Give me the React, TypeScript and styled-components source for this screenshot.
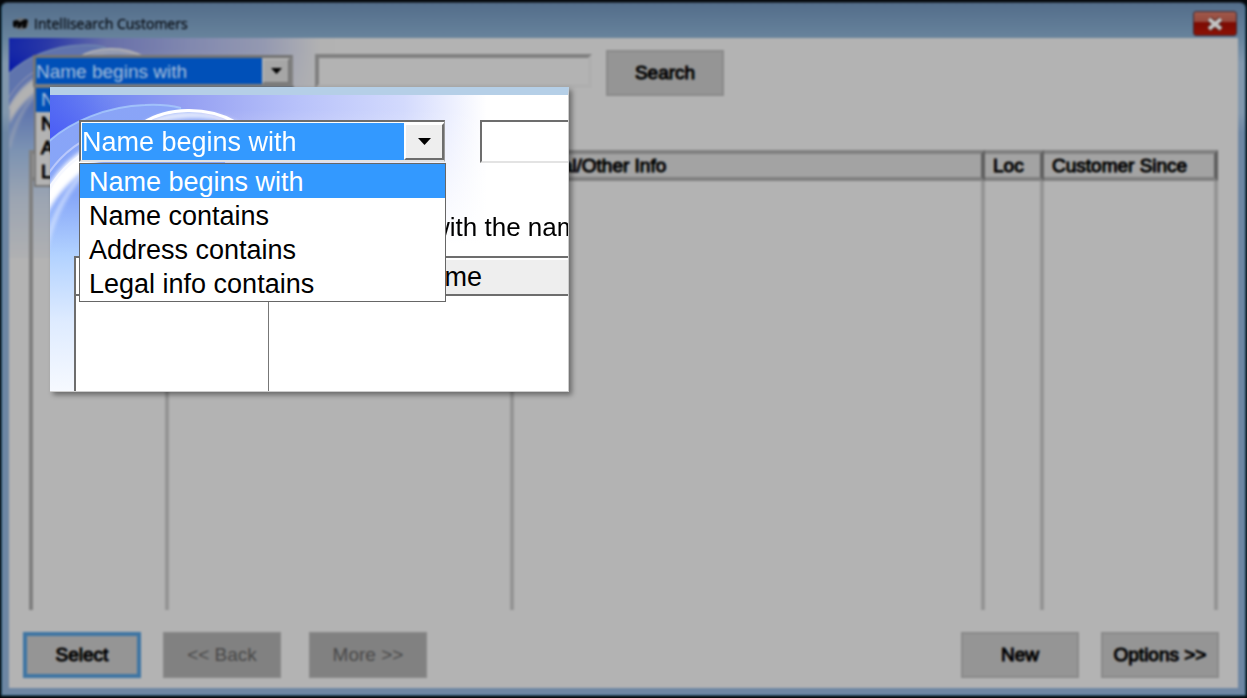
import React from "react";
import styled, { createGlobalStyle } from "styled-components";

const GlobalStyle = createGlobalStyle`
  *, *::before, *::after { box-sizing: border-box; }
  body { margin: 0; background: #05080c; font-family: "Liberation Sans", Arial, sans-serif; }
  button, input, select { font-family: inherit; margin: 0; border-radius: 0; }
`;

const Stage = styled.main`
  position: relative;
  min-height: 100vh;
  display: flex;
  overflow: hidden;
`;

const Window = styled.section`
  flex: 1;
  min-width: 0;
  display: flex;
  flex-direction: column;
  margin: 2px 1px 2px 1px;
  padding: 0 7px 7px;
  border: 1px solid #23566f;
  border-top-color: #2d3a48;
  border-radius: 6px 6px 0 0;
  background: linear-gradient(#536d8a 0, #68849d 36px, #8197ad 60px, #8197ad 110px, #6d86a3 130px);
  filter: blur(1px);
`;

const TitleBar = styled.header`
  height: 35px;
  display: flex;
  align-items: center;
  gap: 4px;
  padding: 6px 1px 0 3px;
`;

const Title = styled.h1`
  margin: 0;
  flex: 1;
  font: 400 14px/20px "Open Sans", sans-serif;
  color: #05090e;
  -webkit-text-stroke: 1px #05090e40;
`;

const CloseButton = styled.button`
  width: 44px;
  height: 25px;
  display: grid;
  place-items: center;
  padding: 0;
  border: 1px solid #3e2a35;
  border-radius: 3px;
  background: linear-gradient(#a05a4c 0, #95483c 42%, #7c0a02 46%, #8a1206 100%);
`;

const Content = styled.div`
  position: relative;
  flex: 1;
  display: flex;
  flex-direction: column;
  background: #b3b3b3;
`;

const Backdrop = styled.svg<{ $dim?: boolean }>`
  position: absolute;
  top: 0;
  left: ${(p) => (p.$dim ? "0" : "-5px")};
  width: ${(p) => (p.$dim ? "326px" : "460px")};
  height: ${(p) => (p.$dim ? "220px" : "310px")};
  filter: ${(p) => (p.$dim ? "brightness(0.7)" : "none")};
`;

const SearchRow = styled.div`
  position: relative;
  display: flex;
  align-items: flex-start;
  padding: 12px 24px 0;
`;

const Combo = styled.div<{ $large?: boolean }>`
  position: relative;
  display: flex;
  flex: none;
  width: ${(p) => (p.$large ? "366px" : "260px")};
  height: ${(p) => (p.$large ? "42px" : "32px")};
  margin-top: ${(p) => (p.$large ? "0" : "5px")};
  padding: ${(p) => (p.$large ? "1px 0 0 1px" : "0")};
  border: ${(p) => (p.$large ? "2px solid #6d6d6d" : "3px solid #747474")};
  border-right: ${(p) => (p.$large ? "1px solid #999" : "3px solid #808080")};
  border-bottom-color: ${(p) => (p.$large ? "#e3e3e3" : "#808080")};
  background: ${(p) => (p.$large ? "#fff" : "#b3b3b3")};
`;

const ComboSelect = styled.select<{ $large?: boolean }>`
  appearance: none;
  flex: 1;
  min-width: 0;
  padding: ${(p) => (p.$large ? "1px 0 0" : "0")};
  border: 0;
  outline: 0;
  background: ${(p) => (p.$large ? "#3399ff" : "#0050b8")};
  color: ${(p) => (p.$large ? "#fff" : "#a6bfdc")};
  font-size: ${(p) => (p.$large ? "27px" : "19px")};
`;

const ComboArrow = styled.span<{ $large?: boolean }>`
  display: grid;
  place-items: center;
  width: ${(p) => (p.$large ? "40px" : "28px")};
  border: 2px solid;
  border-color: ${(p) => (p.$large ? "#fff #6d6d6d #6d6d6d #fff" : "#b3b3b3 #777 #777 #b3b3b3")};
  background: ${(p) => (p.$large ? "#eee" : "#a6a6a6")};
`;

const List = styled.ul<{ $large?: boolean }>`
  position: absolute;
  z-index: 2;
  top: ${(p) => (p.$large ? "41px" : "28px")};
  left: -2px;
  width: ${(p) => (p.$large ? "367px" : "260px")};
  margin: 0;
  padding: 0 0 1px;
  list-style: none;
  border: ${(p) => (p.$large ? "1px solid #666" : "2px solid #777")};
  background: ${(p) => (p.$large ? "#fff" : "#b3b3b3")};
`;

const Option = styled.li<{ $large?: boolean; $active?: boolean }>`
  padding: ${(p) => (p.$large ? "2px 0 0 9px" : "0 0 0 5px")};
  font-size: ${(p) => (p.$large ? "27px" : "19px")};
  line-height: ${(p) => (p.$large ? "32px" : "24px")};
  color: ${(p) => (p.$active ? (p.$large ? "#fff" : "#a6bfdc") : "#000")};
  background: ${(p) => (p.$active ? (p.$large ? "#3399ff" : "#0050b8") : "transparent")};
  -webkit-text-stroke: ${(p) => (p.$large || p.$active ? "0" : "1px")};
`;

const SearchInput = styled.input<{ $large?: boolean }>`
  flex: none;
  width: ${(p) => (p.$large ? "390px" : "277px")};
  height: ${(p) => (p.$large ? "43px" : "34px")};
  margin: ${(p) => (p.$large ? "0 0 0 35px" : "4px 0 0 22px")};
  border: ${(p) => (p.$large ? "2px solid #6d6d6d" : "4px solid #808080")};
  border-right-color: ${(p) => (p.$large ? "#e3e3e3" : "#afafaf")};
  border-bottom-color: ${(p) => (p.$large ? "#e3e3e3" : "#afafaf")};
  background: ${(p) => (p.$large ? "#fff" : "#b3b3b3")};
`;

const Button = styled.button<{ $primary?: boolean }>`
  width: 118px;
  height: 46px;
  flex: none;
  padding: 0;
  border: ${(p) => (p.$primary ? "4px solid #3f75a3" : "2px solid #8a8a8a")};
  background: #959595;
  color: #000;
  font-size: 19px;
  -webkit-text-stroke: 1px #000;
  &:disabled {
    background: #818181;
    border-color: #858585;
    color: #484848;
    -webkit-text-stroke: 0;
  }
`;

const SearchSlot = styled.div`
  padding-left: 14px;
`;

const Results = styled.div`
  flex: 1;
  display: flex;
  padding: 54px 20px 0;
`;

const Grid = styled.table`
  width: 100%;
  table-layout: fixed;
  border-collapse: separate;
  border-spacing: 0;
  border-left: 4px solid #808080;
  position: relative;
  td {
    padding: 0;
    border-right: 4px solid #959595;
  }
`;

const HeadCell = styled.th<{ $wide?: boolean }>`
  height: 31px;
  padding: 0 0 0 ${(p) => (p.$wide ? "16px" : "8px")};
  text-align: left;
  font-size: 19px;
  line-height: 22px;
  font-weight: 400;
  color: #000;
  -webkit-text-stroke: 1px #000;
  background: #a3a3a3;
  border: 4px solid #808080;
  border-left: 0;
  border-right-color: #606060;
`;

const Footer = styled.footer`
  display: flex;
  justify-content: space-between;
  padding: 22px 19px 10px 14px;
`;

const Group = styled.div<{ $gap: number }>`
  display: flex;
  gap: ${(p) => p.$gap}px;
`;

const Magnifier = styled.section`
  position: absolute;
  top: 87px;
  left: 50px;
  width: 519px;
  height: 305px;
  overflow: hidden;
  border-top: 8px solid #b5cfe7;
  border-right: 1px solid #ccc;
  border-bottom: 1px solid #ccc;
  background: #fff;
  box-shadow: 3px 3px 5px #0006;
`;

const LargeRow = styled.div`
  position: relative;
  z-index: 1;
  display: flex;
  padding: 25px 0 0 29px;
`;

const Hint = styled.p`
  position: relative;
  margin: 0;
  padding: 48px 0 0 381px;
  font-size: 26px;
  line-height: 32px;
  white-space: nowrap;
`;

const LargeGrid = styled.table`
  position: relative;
  width: 900px;
  margin: 13px 0 0 24px;
  table-layout: fixed;
  border-collapse: separate;
  border-spacing: 0;
  border-left: 2px solid #6d6d6d;
  background: #fff;
  th {
    height: 40px;
    padding: 2px 0 0 141px;
    text-align: left;
    font-size: 27px;
    line-height: 34px;
    font-weight: 400;
    background: #eee;
    border-top: 2px solid #6d6d6d;
    border-bottom: 2px solid #6d6d6d;
    box-shadow: inset 0 2px #fff;
  }
  th:first-child { background: #fff; }
  td {
    height: 110px;
    padding: 0;
    border-right: 1px solid #777;
  }
`;

const choices = ["Name begins with", "Name contains", "Address contains", "Legal info contains"];

function Waves({ id, dim }: { id: string; dim?: boolean }) {
  return (
    <Backdrop $dim={dim} viewBox="0 0 460 310" preserveAspectRatio="none" aria-hidden="true">
      <defs>
        <linearGradient id={`${id}-top`} x1="0" y1="0" x2="1" y2="0">
          <stop offset="0" stopColor={dim ? "#0c26ee" : "#5068f2"} />
          <stop offset="0.12" stopColor={dim ? "#3a4eee" : "#6f86f2"} />
          <stop offset="0.3" stopColor="#949ff2" />
          <stop offset="0.55" stopColor="#b8c2fa" />
          <stop offset="0.78" stopColor="#d3dafd" />
          <stop offset="0.96" stopColor="#fff" />
        </linearGradient>
        <linearGradient id={`${id}-low`} x1="0" y1="0" x2="0" y2="1">
          <stop offset="0" stopColor="#8aa4f7" />
          <stop offset="0.3" stopColor="#86a6f8" />
          <stop offset="0.5" stopColor="#b2d2ff" />
          <stop offset="0.72" stopColor="#deebff" />
          <stop offset="1" stopColor="#fbfcff" />
        </linearGradient>
        <radialGradient id={`${id}-blue`} cx="0" cy="0.7" r="0.9">
          <stop offset="0" stopColor={dim ? "#0a24ee" : "#4a5cf6"} />
          <stop offset="1" stopColor="#5a70f4" stopOpacity="0" />
        </radialGradient>
        <linearGradient id={`${id}-down`} x1="0" y1="0" x2="0" y2="1">
          <stop offset="0.1" stopColor="#fff" stopOpacity="0" />
          <stop offset="1" stopColor="#fff" />
        </linearGradient>
        <filter id={`${id}-soft`}><feGaussianBlur stdDeviation="2" /></filter>
      </defs>
      <rect width="460" height="310" fill="#fff" />
      <rect width="460" height="150" fill={`url(#${id}-top)`} />
      <rect x="180" width="280" height="150" fill={`url(#${id}-down)`} />
      <rect width="110" height="60" fill={`url(#${id}-blue)`} />
      <path d="M0 50C24 26 64 11 100 10C128 10 150 14 180 28V150H120L60 310H0Z" fill={`url(#${id}-low)`} />
      <path d="M0 50C24 26 64 11 100 10C118 9 128 11 136 13" fill="none" stroke="#a8cbfb" strokeWidth="2" opacity="0.8" />
      <path d="M96 30C118 15 162 10 196 30L188 30C166 20 128 22 108 30Z" fill="#fff" opacity="0.8" filter={`url(#${id}-soft)`} />
      <path d="M98 28C122 12 162 11 190 27" fill="none" stroke="#fff" strokeWidth="3" />
      <path d="M0 98C10 78 22 62 60 42L60 62C34 78 16 92 0 122Z" fill="#fff" filter={`url(#${id}-soft)`} />
      <path d="M0 100C12 80 24 66 50 52" fill="none" stroke="#f6f8ff" strokeWidth="3" />
      <path d="M0 155C8 122 20 94 50 66" fill="none" stroke="#dfeaff" strokeWidth="3" filter={`url(#${id}-soft)`} />
      <path d="M0 84C12 64 30 46 60 36" fill="none" stroke="#b9c8fb" strokeWidth="2" />
    </Backdrop>
  );
}

function SearchBy({ id, large }: { id: string; large?: boolean }) {
  return (
    <Combo $large={large}>
      <ComboSelect $large={large} id={id} aria-label="Search by" defaultValue={choices[0]}>
        {choices.map((c) => <option key={c}>{c}</option>)}
      </ComboSelect>
      <ComboArrow $large={large} aria-hidden="true">
        <svg width={large ? 13 : 11} height={large ? 7 : 6} viewBox="0 0 13 7">
          <path d="M0 0H13L6.5 7Z" fill="#000" />
        </svg>
      </ComboArrow>
      <List $large={large} role="listbox" aria-label="Search by options">
        {choices.map((c, i) => (
          <Option key={c} $large={large} $active={i === 0} role="option" aria-selected={i === 0}>{c}</Option>
        ))}
      </List>
    </Combo>
  );
}

export default function App() {
  return (
    <Stage>
      <GlobalStyle />
      <Window>
        <TitleBar>
          <svg width="18" height="14" viewBox="0 0 18 14" aria-hidden="true">
            <ellipse cx="9" cy="7" rx="8" ry="6" fill="#6b7075" />
            <path d="M1 4L5 3L8 5L13 2L16 3L14 11L10 11L11 7L8 11L5 11L6 7L3 11L1 9Z" fill="#050505" />
          </svg>
          <Title>Intellisearch Customers</Title>
          <CloseButton aria-label="Close">
            <svg width="18" height="14" viewBox="0 0 18 14">
              <path d="M3 2L15 12M15 2L3 12" stroke="#4c2420" strokeWidth="6" />
              <path d="M3 2L15 12M15 2L3 12" stroke="#c4c4c4" strokeWidth="4" />
            </svg>
          </CloseButton>
        </TitleBar>
        <Content>
          <Waves id="back" dim />
          <SearchRow>
            <SearchBy id="criteria" />
            <SearchInput aria-label="Search text" />
            <SearchSlot><Button>Search</Button></SearchSlot>
          </SearchRow>
          <Results>
            <Grid>
              <colgroup>
                <col style={{ width: 136 }} />
                <col style={{ width: 345 }} />
                <col />
                <col style={{ width: 59 }} />
                <col style={{ width: 174 }} />
              </colgroup>
              <thead>
                <tr>
                  <HeadCell aria-label="Number" />
                  <HeadCell aria-label="Name" />
                  <HeadCell $wide>Legal/Other Info</HeadCell>
                  <HeadCell>Loc</HeadCell>
                  <HeadCell>Customer Since</HeadCell>
                </tr>
              </thead>
              <tbody>
                <tr><td /><td /><td /><td /><td /></tr>
              </tbody>
            </Grid>
          </Results>
          <Footer>
            <Group $gap={28}>
              <Group $gap={22}>
                <Button $primary>Select</Button>
                <Button disabled>&lt;&lt; Back</Button>
              </Group>
              <Button disabled>More &gt;&gt;</Button>
            </Group>
            <Group $gap={22}>
              <Button>New</Button>
              <Button>Options &gt;&gt;</Button>
            </Group>
          </Footer>
        </Content>
      </Window>
      <Magnifier aria-label="Search options, enlarged">
        <Waves id="front" />
        <LargeRow>
          <SearchBy id="criteria-large" large />
          <SearchInput $large aria-label="Search text, enlarged" />
        </LargeRow>
        <Hint>with the name</Hint>
        <LargeGrid>
          <colgroup>
            <col style={{ width: 193 }} />
            <col />
          </colgroup>
          <thead><tr><th aria-label="Number" /><th>Name</th></tr></thead>
          <tbody><tr><td /><td /></tr></tbody>
        </LargeGrid>
      </Magnifier>
    </Stage>
  );
}
